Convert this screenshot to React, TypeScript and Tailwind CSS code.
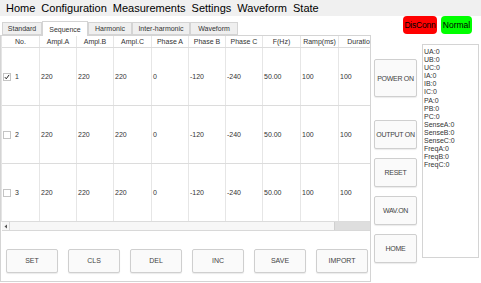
import React from "react";

const menu = ["Home", "Configuration", "Measurements", "Settings", "Waveform", "State"];
const tabs = ["Standard", "Sequence", "Harmonic", "Inter-harmonic", "Waveform"];
const headers = ["No.", "Ampl.A", "Ampl.B", "Ampl.C", "Phase A", "Phase B", "Phase C", "F(Hz)", "Ramp(ms)", "Duratio"];
const rowVals = ["220", "220", "220", "0", "-120", "-240", "50.00", "100", "100"];
const bottomBtns = ["SET", "CLS", "DEL", "INC", "SAVE", "IMPORT"];
const meas = ["UA:0", "UB:0", "UC:0", "IA:0", "IB:0", "IC:0", "PA:0", "PB:0", "PC:0", "SenseA:0", "SenseB:0", "SenseC:0", "FreqA:0", "FreqB:0", "FreqC:0"];

const grid = "grid grid-cols-[38px_37px_37px_38px_37px_37px_37px_38px_38px_40px]";

function Check({ checked }: { checked: boolean }) {
  return (
    <span className="w-[8px] h-[8px] border border-[#c4c4c4] bg-white flex items-center justify-center">
      {checked && (
        <svg width="8" height="8" viewBox="0 0 8 8">
          <path d="M1.2 4.2 L3 6.4 L6.8 1.2" stroke="#222" strokeWidth="1.3" fill="none" />
        </svg>
      )}
    </span>
  );
}

export default function App() {
  return (
    <div className="w-[481px] h-[283px] bg-white overflow-hidden font-['Liberation_Sans',Arial,sans-serif] text-[#333]">
      <div className="h-[16px] bg-[#f0f0f0] flex items-center pl-[6px] gap-[6px] text-[11px] leading-none text-black">
        {menu.map((m) => (
          <span key={m}>{m}</span>
        ))}
      </div>
      <div className="flex">
        <div className="w-[371px] flex flex-col">
          <div className="h-[19px] flex items-end pl-[2px] text-[7px] leading-none">
            {tabs.map((t, i) =>
              i === 1 ? (
                <div key={t} className="w-[46px] h-[15px] bg-white border border-b-0 border-[#d4d4d4] flex items-center justify-center -mb-[1px] relative z-10">
                  {t}
                </div>
              ) : (
                <div
                  key={t}
                  className={`${i === 0 ? "w-[40px]" : i === 2 ? "w-[44px]" : i === 3 ? "w-[58px]" : "w-[48px]"} h-[13px] bg-[#efefef] border border-[#d4d4d4] flex items-center justify-center`}
                >
                  {t}
                </div>
              )
            )}
          </div>
          <div className="h-[247px] border border-[#d4d4d4] flex flex-col">
            <div className="overflow-hidden border-l border-[#e4e4e4] text-[7px] leading-none">
              <div className={`${grid} h-[12px] border-b border-[#dcdcdc]`}>
                {headers.map((h) => (
                  <div key={h} className="border-r border-[#e6e6e6] flex items-center justify-center whitespace-nowrap overflow-hidden">
                    {h}
                  </div>
                ))}
              </div>
              {[1, 2, 3].map((r) => (
                <div key={r} className={`${grid} h-[58px] border-b border-[#dcdcdc]`}>
                  <div className="border-r border-[#e6e6e6] flex items-center pl-[1px] gap-[4px]">
                    <Check checked={r === 1} />
                    <span>{r}</span>
                  </div>
                  {rowVals.map((v, i) => (
                    <div key={i} className="border-r border-[#e6e6e6] flex items-center pl-[1px]">
                      {v}
                    </div>
                  ))}
                </div>
              ))}
            </div>
            <div className="h-[9px] border-b border-[#d8d8d8] bg-[#f7f7f7] flex ml-[1px]">
              <div className="w-[8px] border-r border-[#d8d8d8] flex items-center justify-center">
                <svg width="4" height="5" viewBox="0 0 4 5">
                  <path d="M3 0.5 L0.5 2.5 L3 4.5 Z" fill="#555" />
                </svg>
              </div>
              <div className="flex-1" />
              <div className="w-[36px] bg-[#dedede] border-l border-[#d0d0d0]" />
            </div>
            <div className="flex justify-between pl-[5px] pr-[2px] pt-[18px]">
              {bottomBtns.map((b) => (
                <div key={b} className="w-[52px] h-[24px] bg-[#fafafa] border border-[#cfcfcf] rounded-[2px] shadow-[0_1px_1px_rgba(0,0,0,0.08)] flex items-center justify-center text-[7px] font-medium text-[#444]">
                  {b}
                </div>
              ))}
            </div>
          </div>
        </div>
        <div className="flex-1 flex flex-col">
          <div className="h-[18px] flex justify-end pr-[9px] gap-[4px] text-[8.5px] leading-none text-black">
            <div className="w-[34px] bg-[#ff0000] rounded-[4px] flex items-center justify-center tracking-[-0.2px]">DisConn</div>
            <div className="w-[31px] bg-[#00ff00] rounded-[4px] flex items-center justify-center">Normal</div>
          </div>
          <div className="flex mt-[10px] pl-[3px]">
            <div className="w-[43px] flex flex-col text-[7px] leading-none text-[#444] tracking-[-0.3px]">
              {[
                ["POWER ON", "mt-[15px] h-[38px]"],
                ["OUTPUT ON", "mt-[23px] h-[29px]"],
                ["RESET", "mt-[9px] h-[29px]"],
                ["WAV.ON", "mt-[9px] h-[29px]"],
                ["HOME", "mt-[9px] h-[29px]"],
              ].map(([t, c]) => (
                <div key={t} className={`${c} bg-[#fafafa] border border-[#cfcfcf] rounded-[2px] shadow-[0_1px_1px_rgba(0,0,0,0.08)] flex items-center justify-center whitespace-nowrap`}>
                  {t}
                </div>
              ))}
            </div>
            <div className="ml-[5px] w-[57px] h-[214px] border border-[#d4d4d4] pl-[1px] pt-[3px] text-[7px] leading-[8.1px] text-[#333]">
              {meas.map((m) => (
                <div key={m}>{m}</div>
              ))}
            </div>
          </div>
        </div>
      </div>
    </div>
  );
}
